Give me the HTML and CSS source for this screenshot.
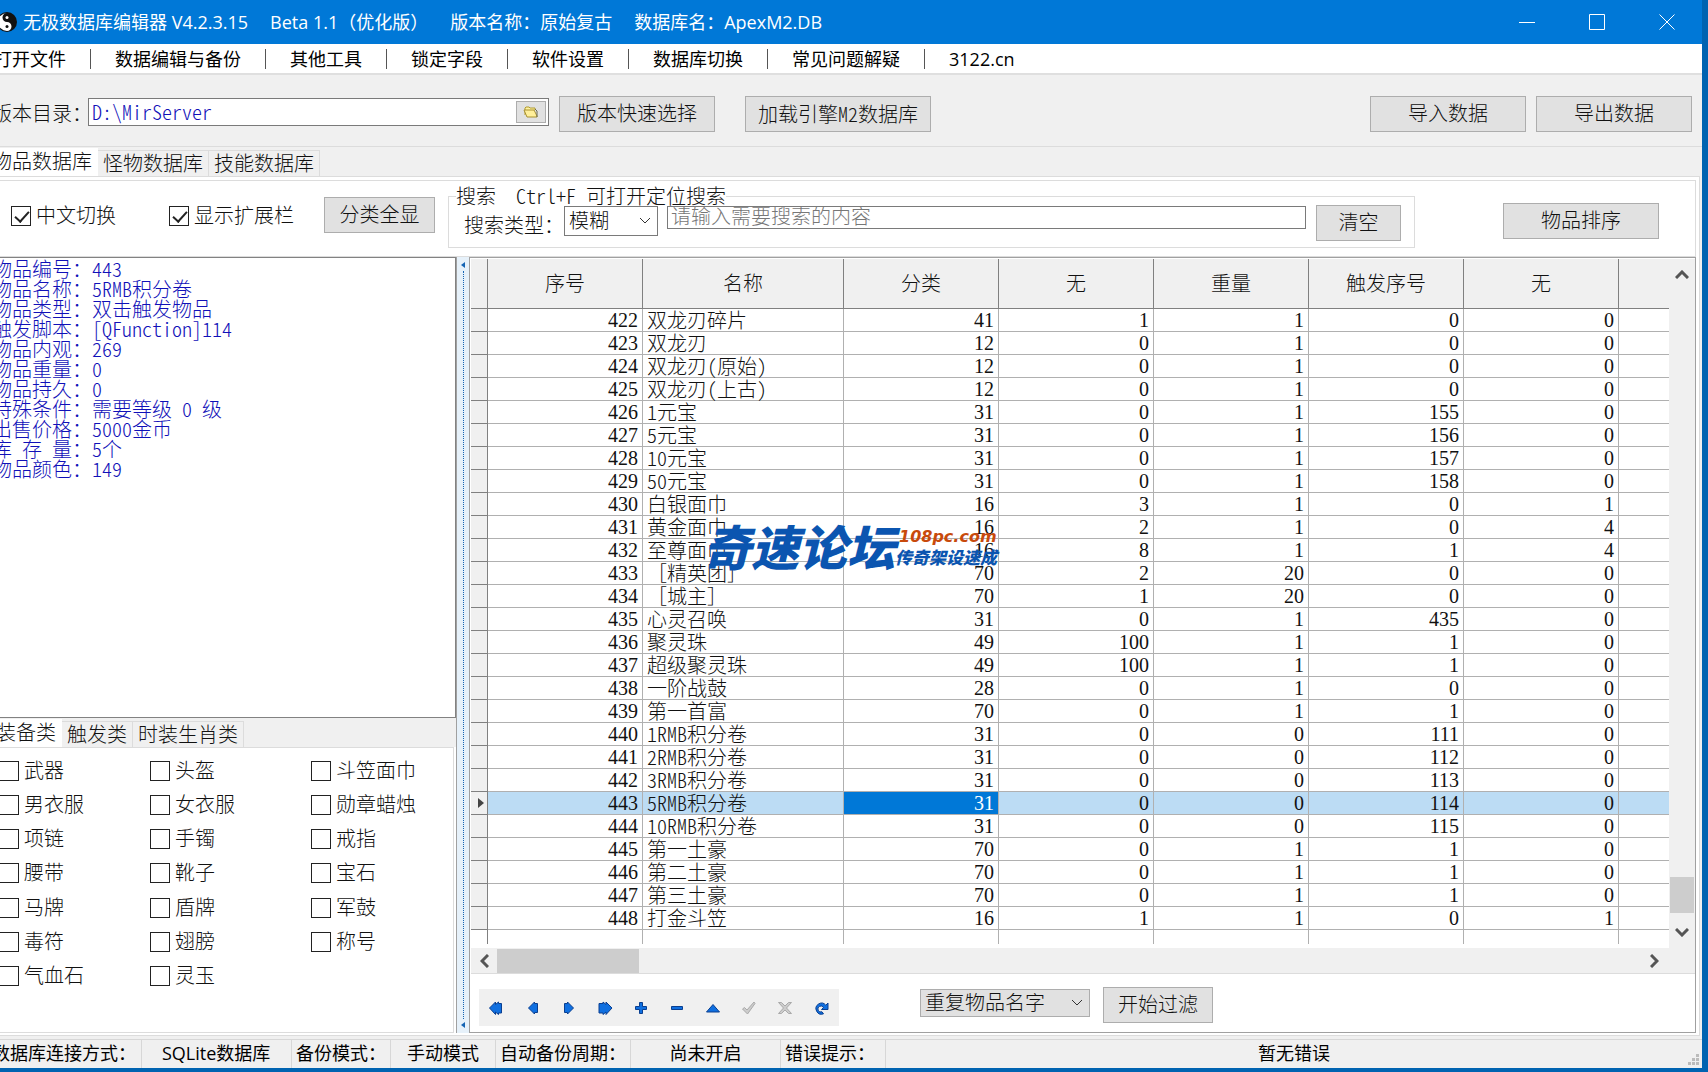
FILE: index.html
```html
<!DOCTYPE html>
<html lang="zh-CN">
<head>
<meta charset="utf-8">
<title>无极数据库编辑器</title>
<link rel="stylesheet" href="styles.css">
</head>
<body>
<div class="window">
  <header class="titlebar">
    <svg class="logo" viewBox="0 0 20 20" width="20" height="20" aria-hidden="true"><circle cx="10" cy="10" r="10" fill="#111"/><path d="M10 1a9 9 0 0 0 0 18a4.500 4.500 0 0 0 0-9a4.500 4.500 0 0 1 0-9z" fill="#fff"/><circle cx="10" cy="5.500" r="1.500" fill="#fff"/><circle cx="10" cy="14.500" r="1.500" fill="#111"/></svg>
    <h1 class="caption"><span>无极数据库编辑器 V4.2.3.15</span><span>Beta 1.1（优化版）</span><span>版本名称：原始复古</span><span>数据库名：ApexM2.DB</span></h1>
    <div class="winbtns">
      <button aria-label="最小化"><svg width="16" height="16"><path d="M0 8.500h16"/></svg></button>
      <button aria-label="最大化"><svg width="16" height="16"><path d="M.5.5h15v15H.5z"/></svg></button>
      <button aria-label="关闭"><svg width="16" height="16"><path d="M.5.5l15 15M15.500.5l-15 15"/></svg></button>
    </div>
  </header>
  <nav class="menu">
    <a href="#">打开文件</a><a href="#">数据编辑与备份</a><a href="#">其他工具</a><a href="#">锁定字段</a><a href="#">软件设置</a><a href="#">数据库切换</a><a href="#">常见问题解疑</a><a href="#">3122.cn</a>
  </nav>
  <section class="toolbar">
    <label class="dir-label" for="dir">版本目录：</label>
    <div class="dirbox">
      <input id="dir" class="half" type="text" value="D:\MirServer">
      <button class="browse" aria-label="浏览"><svg width="16" height="14" viewBox="0 0 16 14"><path d="M2 10V3l1-1h3l1 1h5v2" fill="#fff3a0" stroke="#b09a30"/><path d="M1 5h10l3 6v1H4z" fill="#ffef9a" stroke="#a89030"/><path d="M14 12V6l-2-2" fill="none" stroke="#6a6a50"/></svg></button>
    </div>
    <button class="btn w156 gap-s">版本快速选择</button>
    <button class="btn w186 gap-l half">加载引擎M2数据库</button>
    <span class="spacer"></span>
    <button class="btn w156">导入数据</button>
    <button class="btn w156 gap-s">导出数据</button>
  </section>
  <div class="tabs main-tabs">
    <button class="tab on">物品数据库</button><button class="tab">怪物数据库</button><button class="tab">技能数据库</button>
  </div>
  <main class="page">
    <section class="filters">
      <label class="check"><input type="checkbox" checked>中文切换</label>
      <label class="check ext"><input type="checkbox" checked>显示扩展栏</label>
      <button class="btn show-all">分类全显</button>
      <fieldset class="search">
        <legend class="half">搜索  Ctrl+F 可打开定位搜索</legend>
        <label for="mode">搜索类型：</label>
        <span class="drop mode"><select id="mode"><option>模糊</option></select><svg width="12" height="7"><path d="M1 1l5 5l5-5"/></svg></span>
        <input class="query" type="text" aria-label="搜索内容" placeholder="请输入需要搜索的内容">
        <button class="btn clear">清空</button>
      </fieldset>
      <button class="btn w156 sort">物品排序</button>
    </section>
    <div class="split">
      <aside class="left">
        <div class="info half"><p>物品编号：443</p><p>物品名称：5RMB积分卷</p><p>物品类型：双击触发物品</p><p>触发脚本：[QFunction]114</p><p>物品内观：269</p><p>物品重量：0</p><p>物品持久：0</p><p>特殊条件：需要等级 0 级</p><p>出售价格：5000金币</p><p>库 存 量：5个</p><p>物品颜色：149</p></div>
        <div class="tabs kind-tabs">
          <button class="tab on">装备类</button><button class="tab">触发类</button><button class="tab">时装生肖类</button>
        </div>
        <div class="kinds">
          <label class="check"><input type="checkbox">武器</label><label class="check"><input type="checkbox">头盔</label><label class="check"><input type="checkbox">斗笠面巾</label>
          <label class="check"><input type="checkbox">男衣服</label><label class="check"><input type="checkbox">女衣服</label><label class="check"><input type="checkbox">勋章蜡烛</label>
          <label class="check"><input type="checkbox">项链</label><label class="check"><input type="checkbox">手镯</label><label class="check"><input type="checkbox">戒指</label>
          <label class="check"><input type="checkbox">腰带</label><label class="check"><input type="checkbox">靴子</label><label class="check"><input type="checkbox">宝石</label>
          <label class="check"><input type="checkbox">马牌</label><label class="check"><input type="checkbox">盾牌</label><label class="check"><input type="checkbox">军鼓</label>
          <label class="check"><input type="checkbox">毒符</label><label class="check"><input type="checkbox">翅膀</label><label class="check"><input type="checkbox">称号</label>
          <label class="check"><input type="checkbox">气血石</label><label class="check"><input type="checkbox">灵玉</label>
        </div>
      </aside>
      <div class="splitter"><svg width="4" height="6"><path d="M4 0v6L0 3z"/></svg><i></i><svg width="4" height="6"><path d="M4 0v6L0 3z"/></svg></div>
      <section class="right">
        <div class="grid">
          <div class="sheet">
            <table>
              <colgroup><col class="c-ind"><col class="c-num"><col class="c-name"><col class="c-num"><col class="c-num"><col class="c-num"><col class="c-num"><col class="c-num"><col></colgroup>
              <thead><tr><th></th><th>序号</th><th>名称</th><th>分类</th><th>无</th><th>重量</th><th>触发序号</th><th>无</th><th></th></tr></thead>
              <tbody>
              <tr><td><td>422<td>双龙刃碎片<td>41<td>1<td>1<td>0<td>0<td>
              <tr><td><td>423<td>双龙刃<td>12<td>0<td>1<td>0<td>0<td>
              <tr><td><td>424<td>双龙刃(原始)<td>12<td>0<td>1<td>0<td>0<td>
              <tr><td><td>425<td>双龙刃(上古)<td>12<td>0<td>1<td>0<td>0<td>
              <tr><td><td>426<td>1元宝<td>31<td>0<td>1<td>155<td>0<td>
              <tr><td><td>427<td>5元宝<td>31<td>0<td>1<td>156<td>0<td>
              <tr><td><td>428<td>10元宝<td>31<td>0<td>1<td>157<td>0<td>
              <tr><td><td>429<td>50元宝<td>31<td>0<td>1<td>158<td>0<td>
              <tr><td><td>430<td>白银面巾<td>16<td>3<td>1<td>0<td>1<td>
              <tr><td><td>431<td>黄金面巾<td>16<td>2<td>1<td>0<td>4<td>
              <tr><td><td>432<td>至尊面巾<td>16<td>8<td>1<td>1<td>4<td>
              <tr class="wide"><td><td>433<td>［精英团］<td>70<td>2<td>20<td>0<td>0<td>
              <tr class="wide"><td><td>434<td>［城主］<td>70<td>1<td>20<td>0<td>0<td>
              <tr><td><td>435<td>心灵召唤<td>31<td>0<td>1<td>435<td>0<td>
              <tr><td><td>436<td>聚灵珠<td>49<td>100<td>1<td>1<td>0<td>
              <tr><td><td>437<td>超级聚灵珠<td>49<td>100<td>1<td>1<td>0<td>
              <tr><td><td>438<td>一阶战鼓<td>28<td>0<td>1<td>0<td>0<td>
              <tr><td><td>439<td>第一首富<td>70<td>0<td>1<td>1<td>0<td>
              <tr><td><td>440<td>1RMB积分卷<td>31<td>0<td>0<td>111<td>0<td>
              <tr><td><td>441<td>2RMB积分卷<td>31<td>0<td>0<td>112<td>0<td>
              <tr><td><td>442<td>3RMB积分卷<td>31<td>0<td>0<td>113<td>0<td>
              <tr class="current"><td><svg width="6" height="10"><path d="M0 0l6 5l-6 5z"/></svg><td>443<td>5RMB积分卷<td class="focus">31<td>0<td>0<td>114<td>0<td>
              <tr><td><td>444<td>10RMB积分卷<td>31<td>0<td>0<td>115<td>0<td>
              <tr><td><td>445<td>第一土豪<td>70<td>0<td>1<td>1<td>0<td>
              <tr><td><td>446<td>第二土豪<td>70<td>0<td>1<td>1<td>0<td>
              <tr><td><td>447<td>第三土豪<td>70<td>0<td>1<td>1<td>0<td>
              <tr><td><td>448<td>打金斗笠<td>16<td>1<td>1<td>0<td>1<td>
              <tr class="tail"><td><td><td><td><td><td><td><td><td>
              </tbody>
            </table>
            <div class="mark"><strong>奇速论坛</strong><div><b>108pc.com</b><em>传奇架设速成</em></div></div>
          </div>
          <div class="vbar"><svg width="14" height="9"><path d="M1 8l6-6l6 6"/></svg><i></i><svg width="14" height="9"><path d="M1 1l6 6l6-6"/></svg></div>
          <div class="hbar"><svg width="9" height="14"><path d="M8 1L2 7l6 6"/></svg><i></i><svg width="9" height="14"><path d="M1 1l6 6l-6 6"/></svg></div>
        </div>
        <div class="bottom">
          <div class="navigator">
            <button aria-label="首条"><svg viewBox="0 0 16 14"><path d="M.5 7l6-6v2.500l3-2.500v1.500h3V12h-3v1.500l-3-2.500v2.500z"/></svg></button>
            <button aria-label="上一条"><svg viewBox="0 0 16 14"><path d="M3.500 7l6-6v1.500h3v9h-3V13z"/></svg></button>
            <button aria-label="下一条"><svg viewBox="0 0 16 14"><path d="M12.500 7l-6-6v1.500h-3v9h3V13z"/></svg></button>
            <button aria-label="末条"><svg viewBox="0 0 16 14"><path d="M15 7L9 1v2.500L6 1v1.500H2V12h4v1.500l3-2.500v2.500z"/></svg></button>
            <button aria-label="新增"><svg viewBox="0 0 16 14"><path d="M6.500 1.500h3v4h4v3h-4v4h-3v-4h-4v-3h4z"/></svg></button>
            <button aria-label="删除"><svg viewBox="0 0 16 14"><path d="M2.500 5.500h11v3h-11z"/></svg></button>
            <button aria-label="编辑"><svg viewBox="0 0 16 14"><path d="M8 3.500l6.500 7.500h-13z"/></svg></button>
            <button class="off" aria-label="提交" disabled><svg viewBox="0 0 16 14"><path d="M1.500 8l2-1.500L6 9l7-8l1 1.500L6.500 13z"/></svg></button>
            <button class="off" aria-label="取消" disabled><svg viewBox="0 0 16 14"><path d="M1.500 1.500h3L8 5l3.500-3.500h3L9.500 7l5 5.500h-3L8 9l-3.500 3.500h-3l5-5.500z"/></svg></button>
            <button aria-label="刷新"><svg viewBox="0 0 16 14"><path d="M15 2v6.500H8.500l2-2a3 3 0 1 0-1.500 4.300l1.500 2a5.500 5.500 0 1 1 2.300-8.600z"/></svg></button>
          </div>
          <span class="drop dup"><select aria-label="过滤方式"><option>重复物品名字</option></select><svg width="12" height="7"><path d="M1 1l5 5l5-5"/></svg></span>
          <button class="btn start">开始过滤</button>
        </div>
      </section>
    </div>
  </main>
  <footer class="status">
    <span class="s1">数据库连接方式：</span><span class="s2">SQLite数据库</span><span class="s3">备份模式：</span><span class="s4">手动模式</span><span class="s5">自动备份周期：</span><span class="s6">尚未开启</span><span class="s7">错误提示：</span><span class="s8">暂无错误</span>
    <svg class="grip" width="12" height="12"><path d="M8 0h3v3H8zM4 4h3v3H4zM8 4h3v3H8zM0 8h3v3H0zM4 8h3v3H4zM8 8h3v3H8z"/></svg>
  </footer>
</div>
</body>
</html>
```
FILE: styles.css
```css
* { box-sizing: border-box; }
html { height: 100%; }
body { margin: 0; min-height: 100%; overflow: hidden; }
button, input, select { font: inherit; color: inherit; border-radius: 0; margin: 0; }
button { padding: 0; }
p { margin: 0; }

/* The window hangs 8px over the left edge of the screen. */
.window {
  display: flex;
  flex-direction: column;
  min-height: 100vh;
  margin-left: -8px;
  border-right: 6px solid #0063b1;
  border-bottom: 4px solid #0063b1;
  background: #f0f0f0;
  color: #111;
  font: 300 20px/20px "Liberation Serif", "Noto Sans CJK SC", serif;
}
.half { font-family: "Noto Sans CJK SC", sans-serif; font-feature-settings: "hwid"; }

.titlebar, .menu, .status { font: 400 18px/24px "Open Sans", "Noto Sans CJK SC", sans-serif; }
.titlebar { display: flex; align-items: center; height: 44px; padding-left: 5px; background: #0078d7; color: #fff; }
.caption { display: flex; flex: 1; gap: 22px; margin: 0 0 0 6px; font: inherit; white-space: pre; }
.winbtns { display: flex; }
.winbtns button { width: 70px; height: 42px; border: 0; background: none; }
.winbtns svg { display: block; margin: auto; fill: none; stroke: #fff; }

.menu { display: flex; align-items: center; height: 29px; padding-left: 2px; background: #fff; color: #000; }
.menu a { color: inherit; text-decoration: none; line-height: 20px; padding-right: 24px; }
.menu a + a { border-left: 1px solid #555; padding-left: 24px; }

.toolbar { display: flex; align-items: center; height: 74px; padding: 6px 10px 0 0; border-top: 2px solid #dfdfdf; border-bottom: 1px solid #dcdcdc; }
.dir-label { flex: 0 0 96px; margin-right: -4px; white-space: nowrap; }
.dirbox { display: flex; align-items: center; width: 461px; height: 28px; margin-bottom: 4px; padding-right: 2px; border: 1px solid #7a7a7a; background: #fff; color: #1010b8; }
.dirbox input { flex: 1; min-width: 0; height: 24px; padding: 0 3px; border: 0; background: none; outline: 0; }
.browse { display: grid; place-items: center; width: 30px; height: 22px; border: 1px solid #adadad; background: #e1e1e1; }
.btn { height: 36px; border: 1px solid #adadad; background: #e1e1e1; white-space: nowrap; }
.w156 { width: 156px; }
.w186 { width: 186px; }
.gap-s { margin-left: 10px; }
.gap-l { margin-left: 30px; }
.spacer { flex: 1; }

.tabs { display: flex; align-items: flex-end; background: #f0f0f0; }
.tab { height: 26px; padding: 0 5px; border: 1px solid #dcdcdc; border-width: 1px 1px 0 0; background: #f0f0f0; white-space: nowrap; }
.tab.on { height: 28px; padding: 0 5px 2px 0; border-color: #fff; background: #fff; }
.main-tabs { height: 29px; }

.page { display: flex; flex: 1; flex-direction: column; margin-right: 2px; padding: 3px 3px 2px 0; border: 1px solid #dcdcdc; border-left: 0; background: #fff; }
.filters { display: flex; height: 77px; padding: 5px 36px 0 19px; border: 1px solid #dcdcdc; border-left: 0; }
.check { display: flex; align-items: center; gap: 5px; white-space: nowrap; }
.check input { appearance: none; position: relative; flex: none; width: 20px; height: 20px; border: 1px solid #222; background: #fff; }
.check input:checked::after { content: ""; position: absolute; left: 6px; top: 1px; width: 6px; height: 12px; border: solid #222; border-width: 0 2px 2px 0; rotate: 42deg; }
.filters .check { height: 60px; }
.ext { margin-left: 53px; }
.show-all { width: 111px; margin: 11px 13px 0 30px; }
.search { display: flex; flex: 1; min-width: 0; margin: 0; padding: 0 13px 0 15px; height: 62px; border: 1px solid #dcdcdc; }
.search legend { margin-left: -8px; padding: 0; white-space: pre; }
.search label { flex: 0 0 94px; margin-top: 10px; white-space: nowrap; }
.drop { position: relative; display: flex; }
.drop select { appearance: none; width: 100%; padding: 0 4px; border: 1px solid #7a7a7a; background: #fff; font-weight: 300; }
.drop svg { position: absolute; right: 7px; top: 50%; margin-top: -4px; pointer-events: none; fill: none; stroke: #333; }
.mode { width: 94px; height: 30px; }
.query { flex: 1; min-width: 0; height: 23px; margin: 0 10px 0 9px; padding: 0 3px; border: 1px solid #7a7a7a; }
.query::placeholder { color: #777; }
.search .clear { width: 85px; margin-top: -1px; }
.sort { margin: 17px 0 0 88px; }

.split { display: flex; flex: 1; }
.left { display: flex; flex: 0 0 464px; flex-direction: column; }
.info { height: 461px; padding-top: 1px; border: 1px solid #828282; border-left: 0; color: #1010b8; white-space: pre; }
.kind-tabs { height: 29px; }
.kind-tabs .tab.on { padding: 0 5px 2px 4px; }
.kinds { display: grid; flex: 1; grid-template-columns: 151px 161px 1fr; grid-auto-rows: 20px; align-content: space-between; padding: 13px 0 46px 7px; border: solid #dcdcdc; border-width: 1px 1px 1px 0; margin-right: 2px; }
.splitter { display: flex; flex: 0 0 14px; flex-direction: column; align-items: center; padding: 5px 0; border: solid #a0a0a0; border-width: 0 1px; background: #e6f1fa; }
.splitter svg { fill: #1464b4; }
.splitter i { flex: 1; margin: 3px 0; border-left: 1px dotted #1464b4; }

.right { display: flex; flex: 1; min-width: 0; flex-direction: column; padding: 1px 0 0 1px; border: solid #a0a0a0; border-width: 1px 1px 1px 0; }
.grid { display: grid; grid-template: auto 25px / 1fr 26px; border-bottom: 1px solid #dcdcdc; background: #f0f0f0; }
.sheet { position: relative; background: #fff; padding-bottom: 4px; }
table { width: 100%; table-layout: fixed; border-collapse: separate; border-spacing: 0; }
.c-ind { width: 17px; }
.c-num { width: 155px; }
.c-name { width: 201px; }
th { height: 50px; padding: 0; border: solid #808080; border-width: 0 1px 1px 0; background: #f0f0f0; font-weight: 300; }
td { height: 23px; padding: 0 4px; border: solid #b0b0b0; border-width: 0 1px 1px 0; line-height: 20px; text-align: right; white-space: nowrap; }
td:nth-child(3) { text-align: left; font-family: "Noto Sans CJK SC", sans-serif; font-feature-settings: "hwid"; }
.wide td:nth-child(3) { font-feature-settings: normal; }
td:first-child { padding: 0 3px; border-color: #808080; background: #f0f0f0; }
td:first-child svg { display: block; margin-left: auto; fill: #444; }
th:last-child, td:last-child { border-right: 0; }
.current td:not(:first-child) { background: #bcdcf4; }
.current td.focus { background: #0078d7; color: #fff; }
.tail td { height: 14px; border-bottom: 0; }
.tail td:first-child { background: #fff; }

.mark { position: absolute; left: 232px; top: 260px; display: flex; align-items: center; color: #0b55b0; font-family: "Noto Sans CJK SC", sans-serif; font-style: italic; font-weight: 900; white-space: nowrap; }
.mark strong { font-size: 48px; line-height: 52px; font-weight: 900; }
.mark div { display: flex; flex-direction: column; padding-top: 4px; font-size: 17px; line-height: 20px; }
.mark b { padding-left: 4px; color: #c84a0c; font-family: "DejaVu Sans", sans-serif; font-size: 16px; }

.vbar { display: flex; flex-direction: column; align-items: center; padding: 11px 0; }
.vbar svg, .hbar svg { flex: none; fill: none; stroke: #555; stroke-width: 3px; }
.vbar i { width: 24px; height: 36px; margin: auto 0 15px; background: #cdcdcd; }
.hbar { display: flex; align-items: center; padding: 0 10px 0 9px; }
.hbar i { width: 142px; height: 24px; margin: 0 auto 0 8px; background: #cdcdcd; }

.bottom { display: flex; flex: 1; align-items: flex-start; padding: 13px 0 0 8px; }
.navigator { display: flex; height: 37px; margin-top: 2px; background: #f0f0f0; }
.navigator button { width: 36px; border: 0; background: none; }
.navigator svg { display: block; width: 16px; height: 14px; margin: auto; fill: #0f6fe0; stroke: #0a3f90; }
.navigator .off svg { fill: #ccc; stroke: #aaa; }
.dup { width: 170px; height: 28px; margin: 2px 13px 0 81px; }
.dup select { border-color: #adadad; background: #e1e1e1; }
.start { width: 110px; }

.status { display: flex; height: 32px; padding-top: 3px; color: #000; }
.status span { flex: none; border: solid #d7d7d7; border-width: 1px 1px 0 0; padding-left: 4px; line-height: 27px; white-space: nowrap; }
.status .s1 { width: 150px; padding-left: 0; }
.status .s2 { width: 150px; padding-left: 20px; }
.status .s3 { width: 99px; }
.status .s4 { width: 105px; padding-left: 16px; }
.status .s5 { width: 135px; }
.status .s6 { width: 150px; text-align: center; padding: 0; }
.status .s7 { width: 105px; }
.status .s8 { flex: 1; border-right: 0; padding: 0; text-align: center; }
.grip { align-self: flex-end; margin: 0 2px 2px -14px; fill: #bbb; }
```
